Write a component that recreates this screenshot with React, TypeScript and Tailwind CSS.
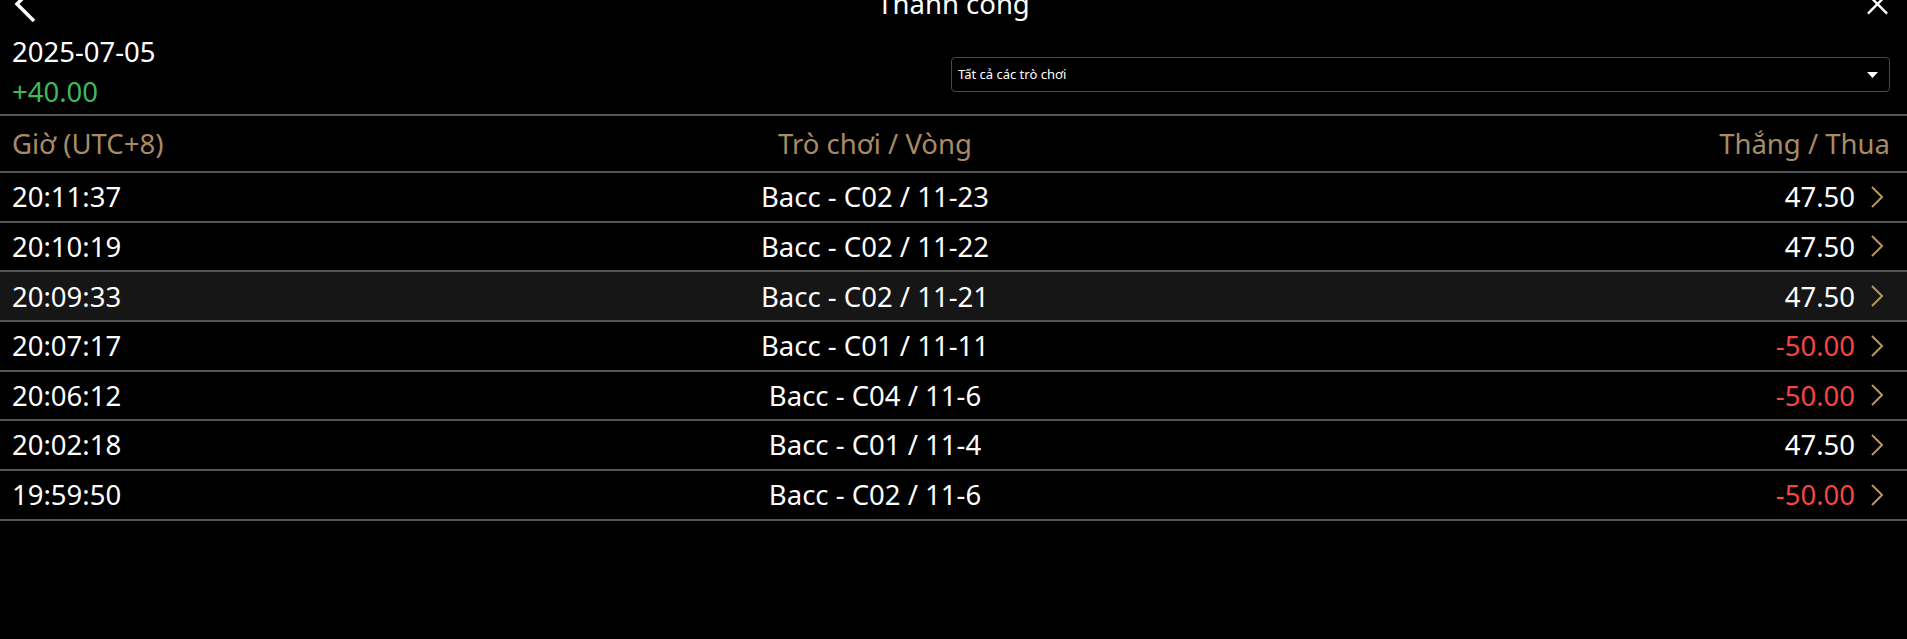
import type React from "react";

interface Row {
  time: string;
  game: string;
  amount: string;
  loss: boolean;
}

const rows: Row[] = [
  { time: "20:11:37", game: "Bacc - C02 / 11-23", amount: "47.50", loss: false },
  { time: "20:10:19", game: "Bacc - C02 / 11-22", amount: "47.50", loss: false },
  { time: "20:09:33", game: "Bacc - C02 / 11-21", amount: "47.50", loss: false },
  { time: "20:07:17", game: "Bacc - C01 / 11-11", amount: "-50.00", loss: true },
  { time: "20:06:12", game: "Bacc - C04 / 11-6", amount: "-50.00", loss: true },
  { time: "20:02:18", game: "Bacc - C01 / 11-4", amount: "47.50", loss: false },
  { time: "19:59:50", game: "Bacc - C02 / 11-6", amount: "-50.00", loss: true },
];

const Chevron = () => (
  <svg width="12" height="22" viewBox="0 0 12 22" fill="none" className="shrink-0">
    <path d="M1 1 L11 11 L1 21" stroke="#b8955e" strokeWidth="2" />
  </svg>
);

const App: React.FC = () => {
  return (
    <div className="min-h-screen bg-black text-white font-['Noto_Sans',sans-serif] overflow-hidden">
      {/* title bar, scrolled partly off the top */}
      <div className="-mt-[14px] flex h-[36px] items-center">
        <div className="w-[40px] pl-[14px]">
          <svg width="22" height="36" viewBox="0 0 22 36" fill="none">
            <path d="M20 1 L3 18 L20 35" stroke="white" strokeWidth="3.5" />
          </svg>
        </div>
        <div className="flex-1 text-center text-[27.5px] leading-[36px]">Thành công</div>
        <div className="flex w-[40px] justify-end pr-[19px]">
          <svg width="22" height="22" viewBox="0 0 22 22" fill="none">
            <path d="M1 1 L21 21 M21 1 L1 21" stroke="white" strokeWidth="2.5" />
          </svg>
        </div>
      </div>

      <div className="mt-[10px] grid grid-cols-2 items-start border-b-2 border-[#555] pb-[2px] pl-[12px] pr-[17px]">
        <div className="text-[27.5px] leading-[40px]">
          <div>2025-07-05</div>
          <div className="text-[#41b85c]">+40.00</div>
        </div>
        <div className="mt-[25px] flex h-[35px] items-center justify-between rounded-[4px] border border-[#4a4a4a] pl-[6px] pr-[11px] text-[13px]">
          <span>Tất cả các trò chơi</span>
          <svg width="11" height="6" viewBox="0 0 11 6">
            <path d="M0 0 H11 L5.5 6 Z" fill="white" />
          </svg>
        </div>
      </div>

      <div className="grid h-[57px] grid-cols-[600px_526px_1fr] items-center border-b-2 border-[#555] pl-[12px] pr-[17px] text-[27.5px] text-[#a88b65]">
        <div>Giờ (UTC+8)</div>
        <div className="text-center">Trò chơi / Vòng</div>
        <div className="text-right">Thắng / Thua</div>
      </div>

      {rows.map((r, i) => (
        <div
          key={r.time}
          className={`grid h-[49.67px] grid-cols-[600px_526px_1fr] items-center border-b-2 border-[#555] pl-[12px] pr-[17px] text-[27.5px] ${
            i === 2 ? "bg-[#161616]" : ""
          }`}
        >
          <div>{r.time}</div>
          <div className="text-center">{r.game}</div>
          <div className="flex items-center justify-end gap-[16px] pr-[7px]">
            <span className={r.loss ? "text-[#f44545]" : "text-white"}>{r.amount}</span>
            <Chevron />
          </div>
        </div>
      ))}
    </div>
  );
};

export default App;
